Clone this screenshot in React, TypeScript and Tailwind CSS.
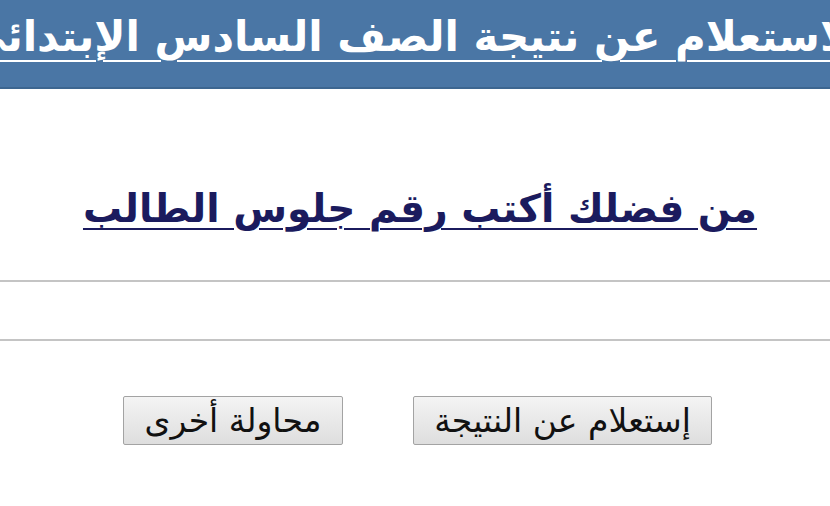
import React from "react";

export default function App() {
  return (
    <div dir="rtl" className="w-[830px] h-[506px] overflow-hidden bg-white" style={{ fontFamily: '"DejaVu Sans", "Liberation Sans", sans-serif' }}>
      {/* header band */}
      <div className="h-[89px] bg-[#4a76a5] border-b-2 border-[#3d6690] flex justify-center overflow-hidden">
        <h1 className="whitespace-nowrap mt-[12px] text-[42px] leading-[50px] font-bold text-white underline decoration-2 underline-offset-[9px]">
          الاستعلام عن نتيجة الصف السادس الإبتدائي
        </h1>
      </div>

      <div className="flex justify-center mt-[96px] pl-[10px]">
        <a href="#" className="whitespace-nowrap text-[39px] leading-[48px] font-bold text-[#1b1b5e] underline decoration-2 underline-offset-[6px]">
          من فضلك أكتب رقم جلوس الطالب
        </a>
      </div>

      <div className="mt-[47px] h-[2px] bg-[#c4c4c4]" />
      <div className="mt-[57px] h-[2px] bg-[#c4c4c4]" />

      <div className="flex justify-center gap-[70px] mt-[55px] pl-[5px]">
        <button className="w-[299px] h-[49px] border border-[#a3a3a3] rounded-[2px] bg-gradient-to-b from-[#f4f4f4] to-[#dedede] text-[33px] leading-none text-[#111]">
          إستعلام عن النتيجة
        </button>
        <button className="w-[220px] h-[49px] border border-[#a3a3a3] rounded-[2px] bg-gradient-to-b from-[#f4f4f4] to-[#dedede] text-[33px] leading-none text-[#111]">
          محاولة أخرى
        </button>
      </div>
    </div>
  );
}
